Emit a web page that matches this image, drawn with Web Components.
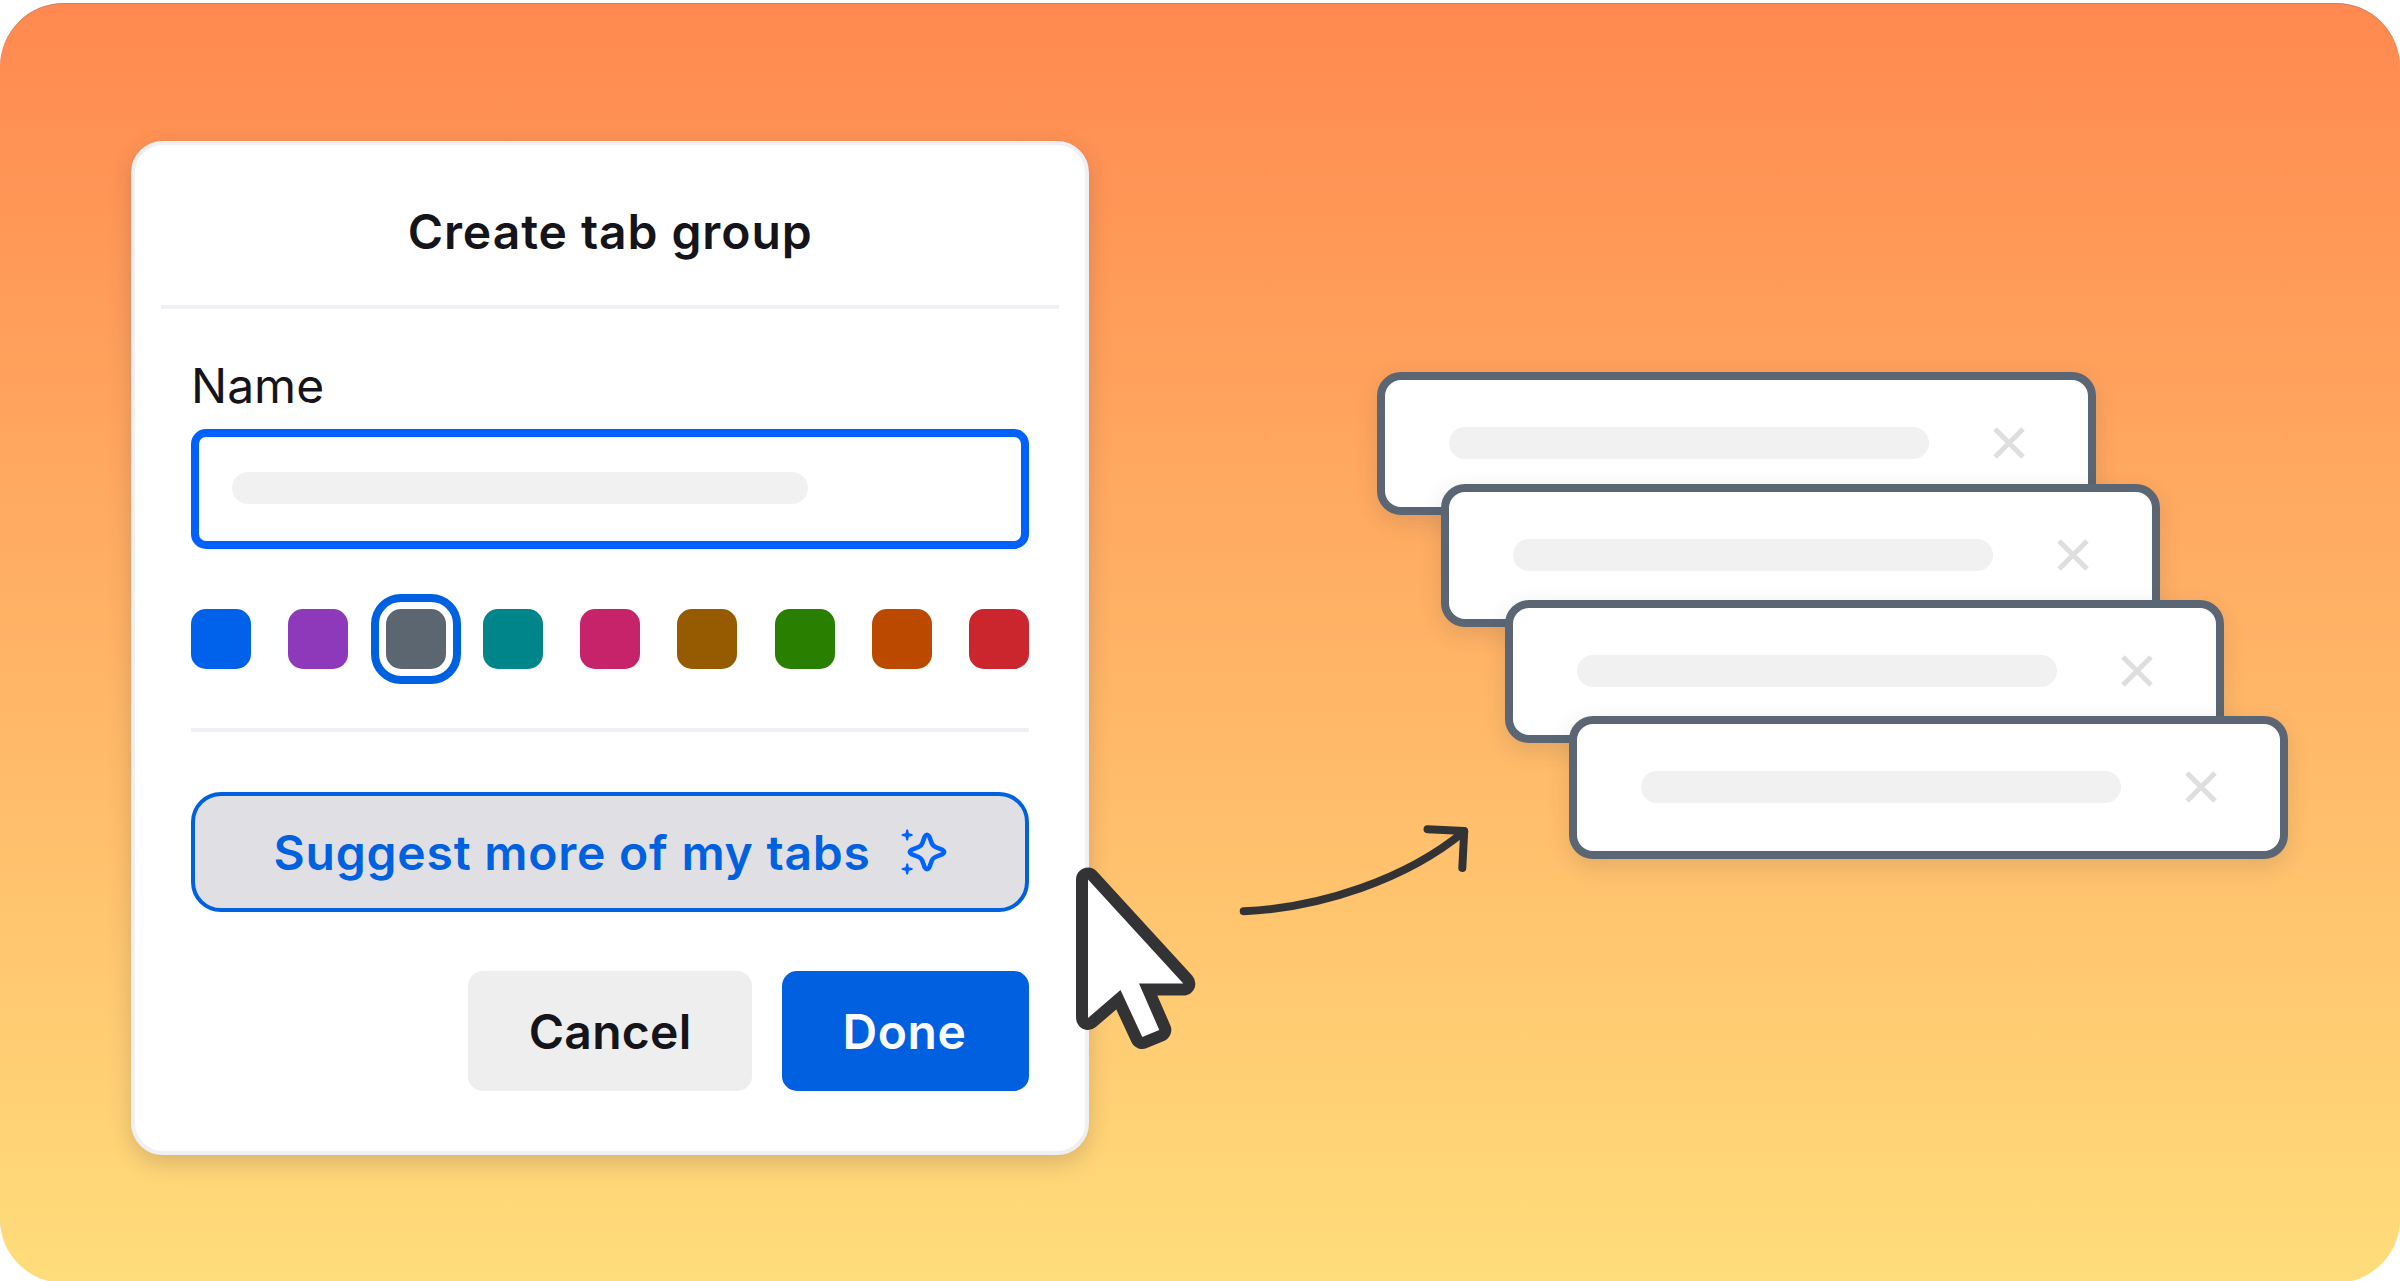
<!DOCTYPE html>
<html lang="en">
<head>
<meta charset="utf-8">
<title>Create tab group</title>
<style>
  html, body { margin: 0; height: 100%; overflow: hidden; background: #fff; }
  body { font-family: Inter, "Noto Sans", sans-serif; color: #15141a; }
</style>
</head>
<body>
<promo-stage>
  <group-panel heading="Create tab group">
    <name-field label="Name"></name-field>
    <color-row selected="2" colors="#0062ea #8d39b9 #5b6671 #00868a #c6236a #965a00 #298000 #bb4a00 #cb262d"></color-row>
    <suggest-button>Suggest more of my tabs</suggest-button>
    <dialog-button slot="actions">Cancel</dialog-button>
    <dialog-button slot="actions" primary>Done</dialog-button>
  </group-panel>
  <tab-stack>
    <tab-card></tab-card>
    <tab-card></tab-card>
    <tab-card></tab-card>
    <tab-card></tab-card>
  </tab-stack>
  <curved-arrow slot="overlay"></curved-arrow>
  <mouse-pointer slot="overlay"></mouse-pointer>
</promo-stage>

<script>
function define(name, render) {
  customElements.define(name, class extends HTMLElement {
    connectedCallback() {
      if (this.shadowRoot) return;
      this.attachShadow({ mode: 'open' }).innerHTML = render(this);
    }
  });
}

define('promo-stage', () => `
  <style>
    :host { display: flex; align-items: flex-start; position: relative; box-sizing: border-box;
      width: 2400px; height: 1280px; margin-top: 3px; padding: 137.7px 0 0 131.3px; gap: 288.3px;
      border-radius: 64px; background: linear-gradient(#ff8950, #ffdd7b);
      box-shadow: inset 0 1px 0 rgba(110,110,120,.35); }
  </style>
  <slot></slot><slot name="overlay"></slot>`);

define('group-panel', el => `
  <style>
    :host { display: flex; flex-direction: column; flex: none; box-sizing: border-box;
      width: 957.7px; height: 1014px; background: #fff; border: 4px solid #f0f0f4; border-radius: 32px;
      padding: 0 25.7px; box-shadow: 0 7.5px 22.5px rgba(58,57,68,.2); }
    header { display: flex; align-items: center; justify-content: center; padding-top: 12px;
      height: 148.3px; border-bottom: 4px solid #f0f0f4;
      font-size: 48px; font-weight: 600; letter-spacing: .93px; line-height: 60px; }
    header span { padding-top: 2px; }
    .body { display: flex; flex-direction: column; padding: 0 30px; }
    footer { display: flex; justify-content: flex-end; gap: 29.7px; margin-top: 59.7px; }
  </style>
  <header><span>${el.getAttribute('heading')}</span></header>
  <div class="body"><slot></slot><footer><slot name="actions"></slot></footer></div>`);

define('name-field', el => `
  <style>
    :host { display: flex; flex-direction: column; margin-top: 46.7px; }
    label { font-size: 48px; line-height: 60px; height: 73px; }
    .input { display: flex; align-items: center; box-sizing: border-box; height: 120px;
      border: 8px solid #0061ff; border-radius: 15px; padding-left: 33px; background: #fff; }
    .value { width: 576px; height: 32px; border-radius: 16px; background: #f1f1f1; margin-top: -2px; }
  </style>
  <label>${el.getAttribute('label')}</label>
  <div class="input"><div class="value"></div></div>`);

define('color-row', el => {
  const sel = +el.getAttribute('selected');
  return `
  <style>
    :host { display: flex; justify-content: space-between; margin-top: 60px; padding-bottom: 59.6px;
      border-bottom: 4px solid #f0f0f4; }
    i { width: 60px; height: 60px; border-radius: 15px; }
    .on { outline: 8px solid #0061e0; outline-offset: 7px; border-radius: 15px; }
  </style>` + el.getAttribute('colors').split(' ')
    .map((c, n) => `<i class="${n === sel ? 'on' : ''}" style="background:${c}"></i>`).join('');
});

define('suggest-button', () => `
  <style>
    :host { display: flex; align-items: center; justify-content: center; gap: 30px; box-sizing: border-box;
      height: 120px; margin-top: 59.4px; border: 4px solid #0061e0; border-radius: 30px; background: #e0dfe4;
      color: #0061e0; font-size: 48px; font-weight: 600; letter-spacing: .78px; line-height: 60px; }
    span { padding-top: 3px; white-space: nowrap; }
    svg { display: block; flex: none; margin-top: 1px; }
  </style>
  <span><slot></slot></span>
  <svg width="46" height="46" viewBox="0 0 46 46">
    <path transform="translate(26 23)" fill="none" stroke="#0062ff" stroke-width="4.5" stroke-linejoin="round"
      d="M-2.2-15.6Q0-18.9 2.2-15.6L4.8-8.6Q5.7-6.1 8.4-5L15.6-2.2Q18.9 0 15.6 2.2L8.4 5Q5.7 6.1 4.8 8.6L2.2 15.6Q0 18.9-2.2 15.6L-4.8 8.6Q-5.7 6.1-8.4 5L-15.6 2.2Q-18.9 0-15.6-2.2L-8.4-5Q-5.7-6.1-4.8-8.6Z"/>
    <g fill="#0062ff">
      <path id="s" transform="translate(6.2 6)" d="M-1-4.7Q0-6.7 1-4.7L1.7-1.7L4.7-1Q6.7 0 4.7 1L1.7 1.7L1 4.7Q0 6.7-1 4.7L-1.7 1.7L-4.7 1Q-6.7 0-4.7-1L-1.7-1.7Z"/>
      <use href="#s" y="34"/>
    </g>
  </svg>`);

define('dialog-button', el => {
  const p = el.hasAttribute('primary');
  return `
  <style>
    :host { display: flex; align-items: center; justify-content: center; box-sizing: border-box;
      width: ${p ? 247.6 : 283.7}px; height: 119.7px; border-radius: 15px; padding: 2px ${p ? 2 : 0}px 0 0;
      background: ${p ? '#0060e0' : '#eee'}; color: ${p ? '#fbfbfe' : '#15141a'};
      font-size: 48px; font-weight: 600; letter-spacing: ${p ? .6 : .3}px; line-height: 60px; }
  </style>
  <slot></slot>`;
});

define('tab-stack', () => `
  <style>
    :host { display: flex; flex-direction: column; margin-top: 230.9px; }
    ::slotted(tab-card) { margin-top: -27px; }
    ::slotted(tab-card:nth-child(1)) { margin-top: 0; }
    ::slotted(tab-card:nth-child(2)) { margin-left: 64px; margin-top: -31px; }
    ::slotted(tab-card:nth-child(3)) { margin-left: 128px; }
    ::slotted(tab-card:nth-child(4)) { margin-left: 192px; }
  </style>
  <slot></slot>`);

define('tab-card', () => `
  <style>
    :host { display: flex; align-items: center; gap: 64px; isolation: isolate; box-sizing: border-box;
      width: 719px; height: 143px; padding-left: 64px; border: 8px solid #5a6673; border-radius: 24px;
      background: #fff; box-shadow: 0 7.5px 22.5px rgba(58,57,68,.14); }
    div { width: 480px; height: 32px; border-radius: 16px; background: #f1f1f1; }
  </style>
  <div></div>
  <svg width="32" height="32" viewBox="0 0 32 32"><path d="M2 2L30 30M30 2L2 30" stroke="#dedede" stroke-width="5"/></svg>`);

define('curved-arrow', () => `
  <style>:host { display: block; position: absolute; left: 1230px; top: 807px; } svg { display: block; }</style>
  <svg width="260" height="120" viewBox="0 0 260 120" fill="none" stroke="#333336" stroke-width="8" stroke-linecap="round" stroke-linejoin="round">
    <path d="M13.7 101.2C90 98 177 69 234 21.5"/>
    <path d="M197.5 19.2L234.2 21L232.3 58"/>
  </svg>`);

define('mouse-pointer', () => `
  <style>:host { display: block; position: absolute; left: 1070px; top: 860px; } svg { display: block; }</style>
  <svg width="135" height="195" viewBox="1070 863 135 195">
    <path d="M1088 879.5L1183.3 983.6H1139L1159.3 1030L1142.3 1037L1120.5 990L1088 1018Z"
      fill="#fff" stroke="#333336" stroke-width="24" stroke-linejoin="round" paint-order="stroke"/>
  </svg>`);
</script>
</body>
</html>
